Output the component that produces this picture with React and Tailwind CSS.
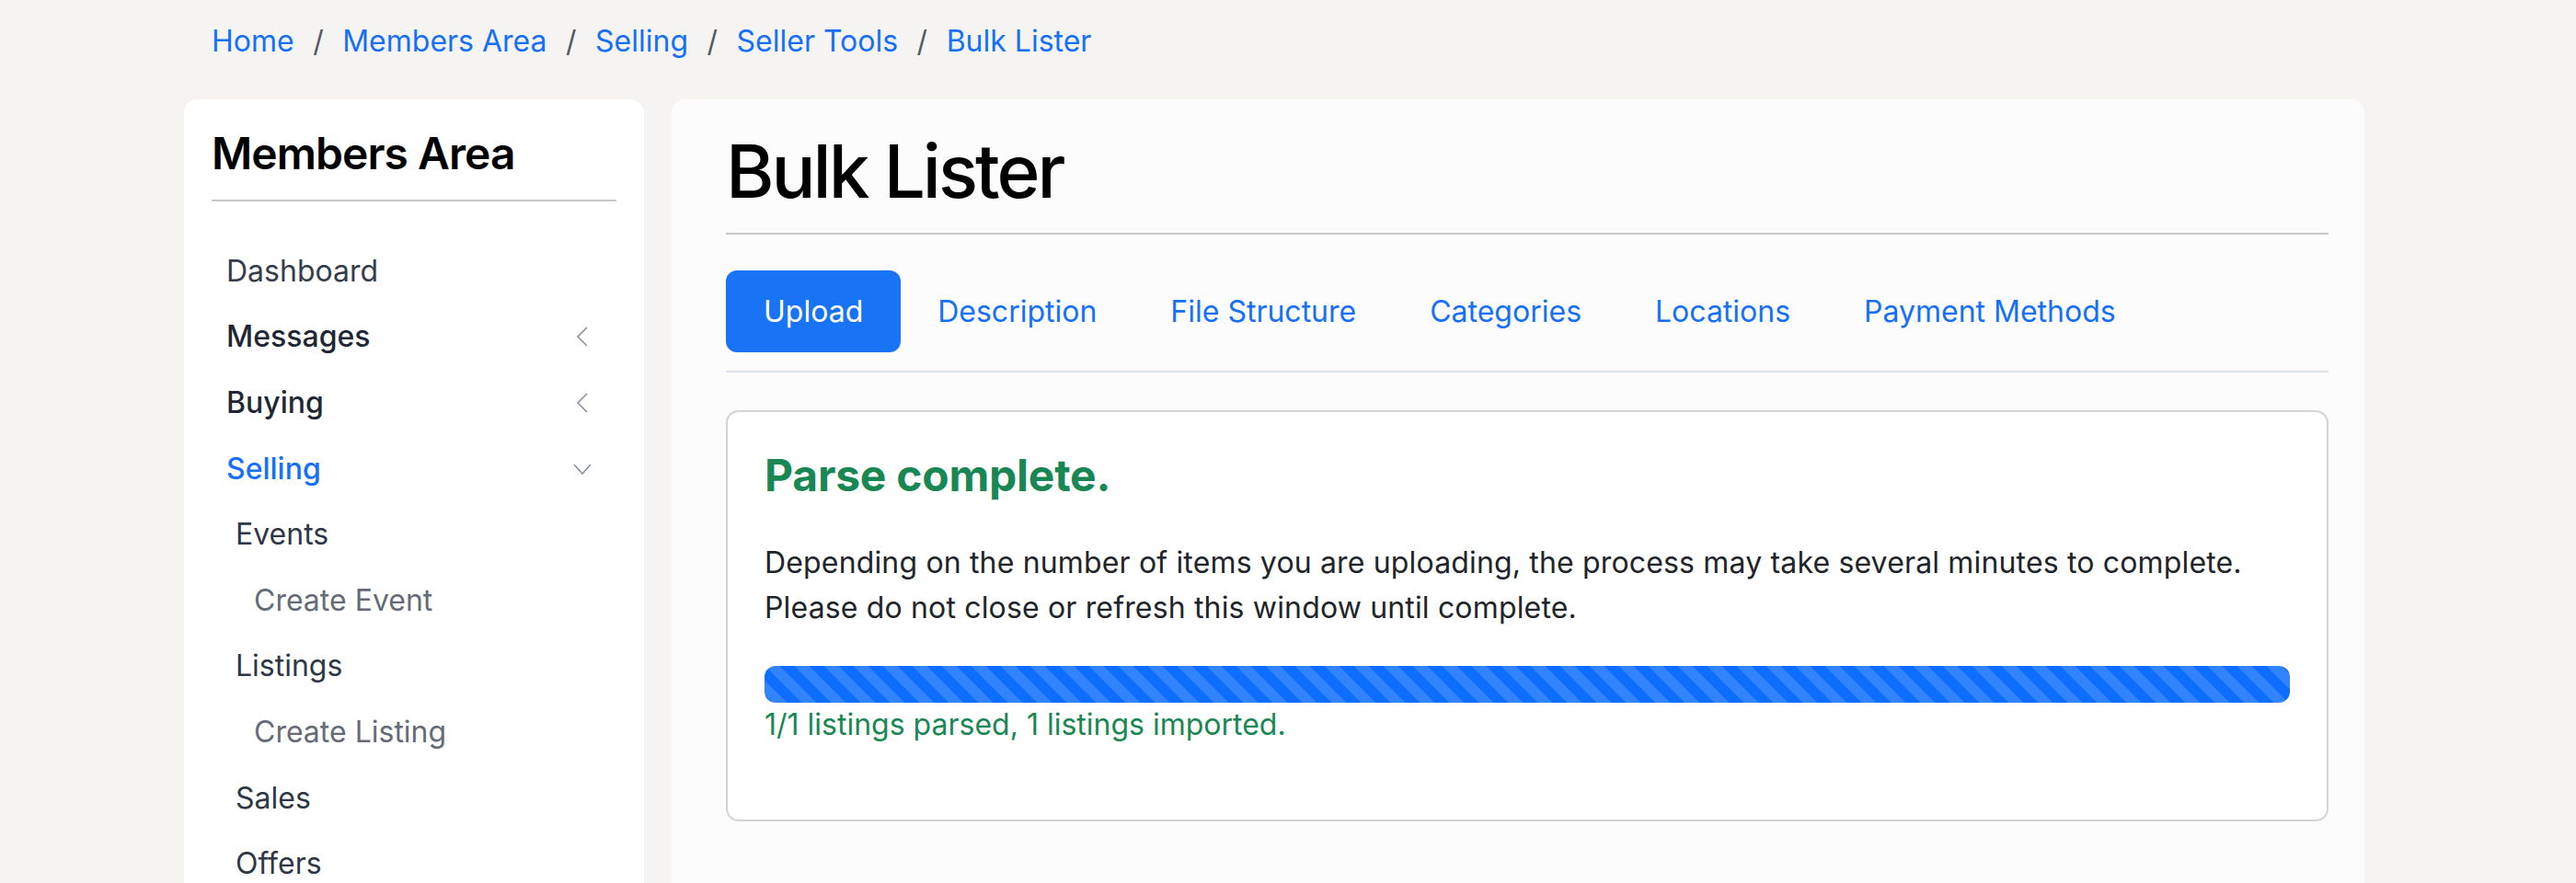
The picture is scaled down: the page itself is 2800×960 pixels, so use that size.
import React from "react";

const crumbs = ["Home", "Members Area", "Selling", "Seller Tools", "Bulk Lister"];

const tabs = ["Upload", "Description", "File Structure", "Categories", "Locations", "Payment Methods"];

const menu = [
  { label: "Dashboard", cls: "pl-[16px] text-[#353d4b] font-normal" },
  { label: "Messages", cls: "pl-[16px] text-[#1f2735] font-medium", icon: "left" },
  { label: "Buying", cls: "pl-[16px] text-[#1f2735] font-medium", icon: "left" },
  { label: "Selling", cls: "pl-[16px] text-[#1670f6] font-medium", icon: "down" },
  { label: "Events", cls: "pl-[26px] text-[#2f3747] font-normal" },
  { label: "Create Event", cls: "pl-[46px] text-[#646b76] font-normal" },
  { label: "Listings", cls: "pl-[26px] text-[#2f3747] font-normal" },
  { label: "Create Listing", cls: "pl-[46px] text-[#646b76] font-normal" },
  { label: "Sales", cls: "pl-[26px] text-[#2f3747] font-normal" },
  { label: "Offers", cls: "pl-[26px] text-[#2f3747] font-normal" },
];

function Chevron({ dir }) {
  return (
    <svg width="20" height="22" viewBox="0 0 20 22" fill="none" className="shrink-0">
      {dir === "down" ? (
        <polyline points="1,6 10,16 19,6" stroke="#8a929f" strokeWidth="1.6" fill="none" />
      ) : (
        <polyline points="15,1 5,11 15,21" stroke="#8a929f" strokeWidth="1.6" fill="none" />
      )}
    </svg>
  );
}

export default function App() {
  return (
    <div className="min-h-screen bg-[#f5f4f2] font-['Inter','Noto_Sans',sans-serif] pl-[200px] text-[32px]">
      {/* breadcrumb trail */}
      <nav className="h-[108px] pt-[21px] pl-[30px] flex items-start leading-[48px]">
        {crumbs.map((c, i) => (
          <React.Fragment key={c}>
            {i > 0 && <span className="mx-[20.5px] text-[#555b62]">/</span>}
            <a className="text-[#1670f6]">{c}</a>
          </React.Fragment>
        ))}
      </nav>

      <div className="flex gap-[30px] items-stretch">
        {/* side navigation */}
        <aside className="w-[500px] shrink-0 bg-white rounded-[15px] px-[30px] pt-[30px] pb-[30px]">
          <h2 className="text-[48px] font-semibold leading-[57.6px] tracking-[-0.02em] text-black">Members Area</h2>
          <div className="mt-[21.5px] h-[2px] bg-[#c8c8c8]" />
          <ul className="mt-[40px]">
            {menu.map((m) => (
              <li key={m.label} className="h-[71.6px] flex items-center justify-between pr-[27px]">
                <span className={m.cls + " leading-[48px]"}>{m.label}</span>
                {m.icon && <Chevron dir={m.icon} />}
              </li>
            ))}
          </ul>
        </aside>

        {/* main panel */}
        <main className="w-[1840px] shrink-0 bg-[#fcfcfc] rounded-[15px] pl-[59px] pr-[39px] pt-[30px] pb-[60px]">
          <h1 className="text-[80px] font-medium leading-[96px] tracking-[-0.038em] text-black">Bulk Lister</h1>
          <div className="mt-[19px] h-[2px] bg-[#c6c6c6]" />

          <div className="mt-[39px] flex border-b-2 border-[#dee2e6] pb-[20px]">
            {tabs.map((t, i) => (
              <div
                key={t}
                className={
                  i === 0
                    ? "h-[89px] px-[41px] flex items-center rounded-[12px] bg-[#1874f5] text-white"
                    : "h-[89px] px-[40px] flex items-center text-[#1670f6]"
                }
              >
                {t}
              </div>
            ))}
          </div>

          <section className="mt-[41px] rounded-[14px] border-2 border-[#d4d4d4] bg-white px-[40px] pt-[40px] pb-[79px]">
            <h3 className="text-[48px] font-bold leading-[57.6px] tracking-[-0.005em] text-[#198754]">Parse complete.</h3>
            <p className="mt-[41px] leading-[49px] tracking-[0.005em] text-[#212529]">
              Depending on the number of items you are uploading, the process may take several minutes to complete.
              <br />
              Please do not close or refresh this window until complete.
            </p>
            <div className="mt-[39px] h-[40px] rounded-[12px] bg-[#0d6efd] bg-[linear-gradient(45deg,rgba(255,255,255,0.15)_25%,transparent_25%,transparent_50%,rgba(255,255,255,0.15)_50%,rgba(255,255,255,0.15)_75%,transparent_75%,transparent)] bg-[length:32px_32px]" />
            <div className="leading-[48px] text-[#198754]">1/1 listings parsed, 1 listings imported.</div>
          </section>
        </main>
      </div>
    </div>
  );
}
